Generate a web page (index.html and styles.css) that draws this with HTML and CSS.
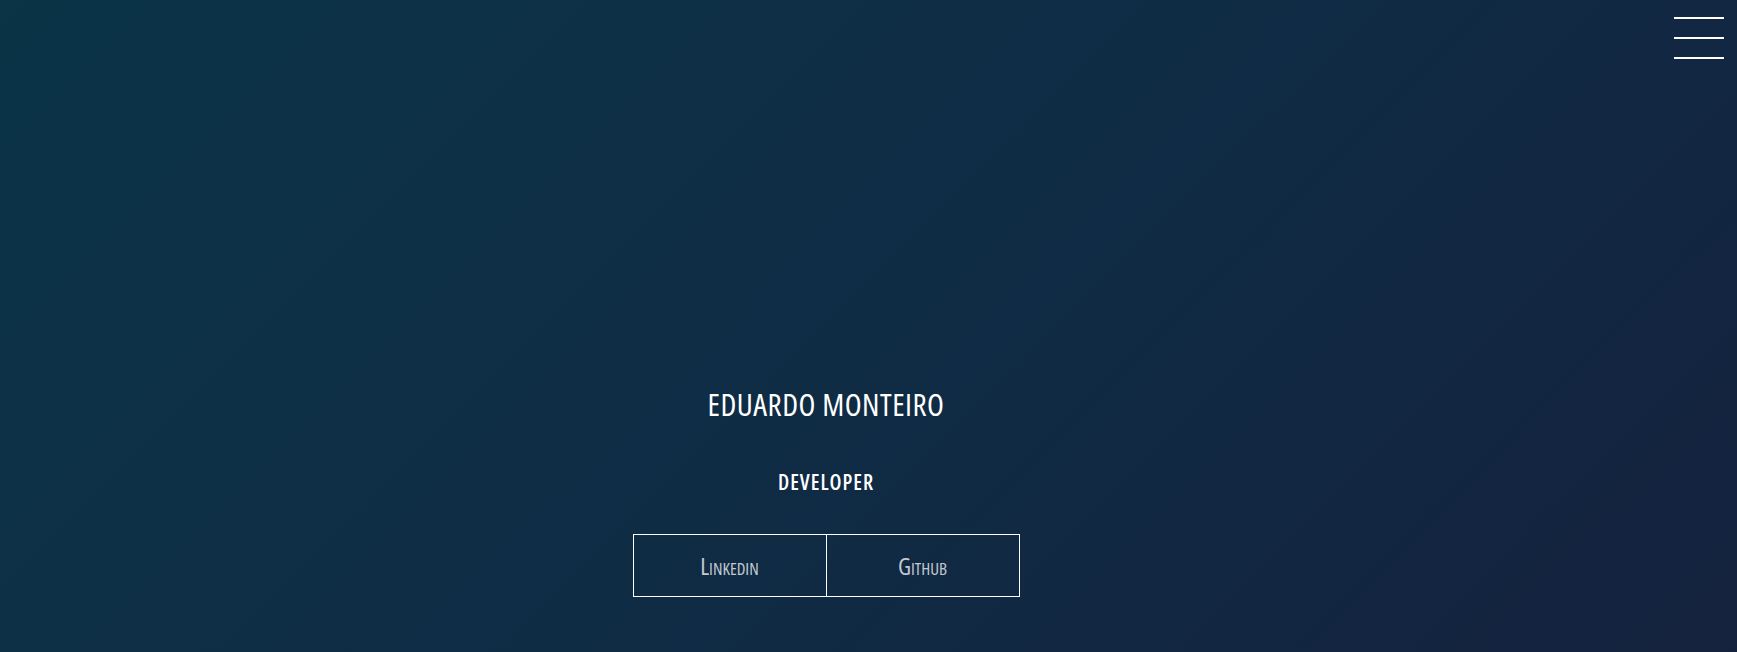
FILE: index.html
```html
<!DOCTYPE html>
<html lang="en">
<head>
<meta charset="utf-8">
<title>Eduardo Monteiro</title>
<link rel="stylesheet" href="styles.css">
</head>
<body>
<div class="page">
  <main class="hero">
    <h1 class="name">Eduardo Monteiro</h1>
    <h2 class="role">Developer</h2>
    <div class="links">
      <a class="btn" href="#">Linkedin</a>
      <a class="btn" href="#">Github</a>
    </div>
  </main>
  <nav class="side">
    <button class="burger" aria-label="Menu">
      <span class="bar"></span>
      <span class="bar"></span>
      <span class="bar"></span>
    </button>
  </nav>
</div>
</body>
</html>
```
FILE: styles.css
```css
html, body {
  margin: 0;
  padding: 0;
  height: 100%;
}
body {
  background: linear-gradient(135deg, #0b3447 0%, #0f2c45 50%, #15223e 100%);
  color: #fff;
  font-family: "Open Sans", sans-serif;
  font-stretch: 75%;
  overflow: hidden;
}
.page {
  display: flex;
  height: 652px;
}
.hero {
  flex: 1;
  display: flex;
  flex-direction: column;
  align-items: center;
  padding-top: 385px;
}
.name {
  margin: 0;
  font-size: 31px;
  font-weight: 400;
  text-transform: uppercase;
  letter-spacing: 0.5px;
  line-height: 38px;
}
.role {
  margin: 46px 0 0;
  font-size: 21px;
  font-weight: 600;
  text-transform: uppercase;
  letter-spacing: 1px;
  line-height: 26px;
}
.links {
  display: flex;
  margin-top: 39px;
}
.btn {
  width: 192px;
  height: 61px;
  border: 1px solid #fff;
  display: flex;
  align-items: center;
  justify-content: center;
  color: rgba(255, 255, 255, 0.75);
  text-decoration: none;
  font-size: 24px;
  font-weight: 400;
  font-variant: small-caps;
}
.btn + .btn {
  margin-left: -1px;
}
.side {
  width: 85px;
  display: flex;
  justify-content: flex-end;
  align-items: flex-start;
}
.burger {
  margin: 17px 13px 0 0;
  padding: 0;
  border: 0;
  background: none;
  width: 50px;
  display: flex;
  flex-direction: column;
  gap: 18px;
}
.bar {
  display: block;
  height: 2px;
  background: #fff;
}
```
